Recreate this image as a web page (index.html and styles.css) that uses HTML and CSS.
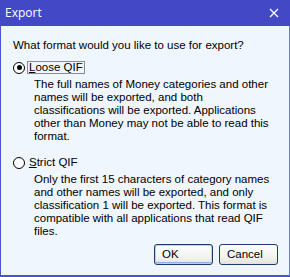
FILE: index.html
```html
<!DOCTYPE html>
<html lang="en">
<head>
    <meta charset="UTF-8">
    <title>Export</title>
    <link rel="stylesheet" href="styles.css">
</head>
<body>
<div class="window">
    <div class="titlebar">
        <div class="title">Export</div>
        <svg class="close" width="10" height="10" viewBox="0 0 10 10">
            <path d="M1 1L9 9M9 1L1 9" stroke="#fff" stroke-width="1.3" fill="none"/>
        </svg>
    </div>
    <div class="content">
        <div class="question">What format would you like to use for export?</div>
        <div class="option">
            <span class="radio checked"></span>
            <span class="label focus"><u>L</u>oose QIF</span>
        </div>
        <div class="desc">The full names of Money categories and other names will be exported, and both classifications will be exported. Applications other than Money may not be able to read this format.</div>
        <div class="option second">
            <span class="radio"></span>
            <span class="label"><u>S</u>trict QIF</span>
        </div>
        <div class="desc">Only the first 15 characters of category names and other names will be exported, and only classification 1 will be exported. This format is compatible with all applications that read QIF files.</div>
        <div class="buttons">
            <div class="btn default">OK</div>
            <div class="btn">Cancel</div>
        </div>
    </div>
</div>
</body>
</html>
```

FILE: styles.css
```css
*{
    margin: 0;
    padding: 0;
    box-sizing: border-box;
}
body{
    width: 290px;
    height: 277px;
    overflow: hidden;
    font-family: "Liberation Sans", Arial, sans-serif;
    font-size: 11.5px;
    color: #000;
}
.window{
    width: 290px;
    height: 277px;
    display: flex;
    flex-direction: column;
    background: #eff6fe;
    border-left: 1px solid #4c52d4;
    border-right: 1px solid #6f74dc;
    border-bottom: 2px solid #4c52d4;
}
.titlebar{
    height: 26px;
    margin: 0 -1px;
    background: #4248c6;
    display: flex;
    align-items: center;
    justify-content: space-between;
    padding: 0 11px 1px 5px;
}
.title{
    font-family: "Open Sans", "Noto Sans", sans-serif;
    font-size: 12px;
    color: #fff;
}
.content{
    flex-grow: 1;
    padding: 13px 0 0 12px;
    line-height: 13px;
}
.option{
    display: flex;
    align-items: center;
    margin-top: 9px;
    height: 13px;
}
.option.second{
    margin-top: 13px;
}
.radio{
    width: 12px;
    height: 12px;
    border: 1px solid #000;
    border-radius: 50%;
    background: #fff;
    position: relative;
    margin-right: 2px;
}
.radio.checked::after{
    content: "";
    position: absolute;
    left: 2.5px;
    top: 2.5px;
    width: 5px;
    height: 5px;
    border-radius: 50%;
    background: #000;
}
.label{
    padding: 0 1px;
    border: 1px solid transparent;
    height: 13px;
    line-height: 11px;
}
.label.focus{
    border-color: #8c8c8c;
}
.desc{
    margin: 4px 18px 0 21px;
}
.buttons{
    display: flex;
    justify-content: flex-end;
    gap: 6px;
    margin: 6px 11px 0 0;
}
.btn{
    width: 59px;
    height: 21px;
    border: 1px solid #1d3b6c;
    border-radius: 3px;
    background: linear-gradient(#fefefe, #f1f1ec 70%, #e2e1d8);
    line-height: 19px;
    padding-left: 7px;
}
.btn.default{
    box-shadow: inset 0 0 0 1px #bcd2f4, inset 0 -1px 0 1px #8bb0ea;
}
```
